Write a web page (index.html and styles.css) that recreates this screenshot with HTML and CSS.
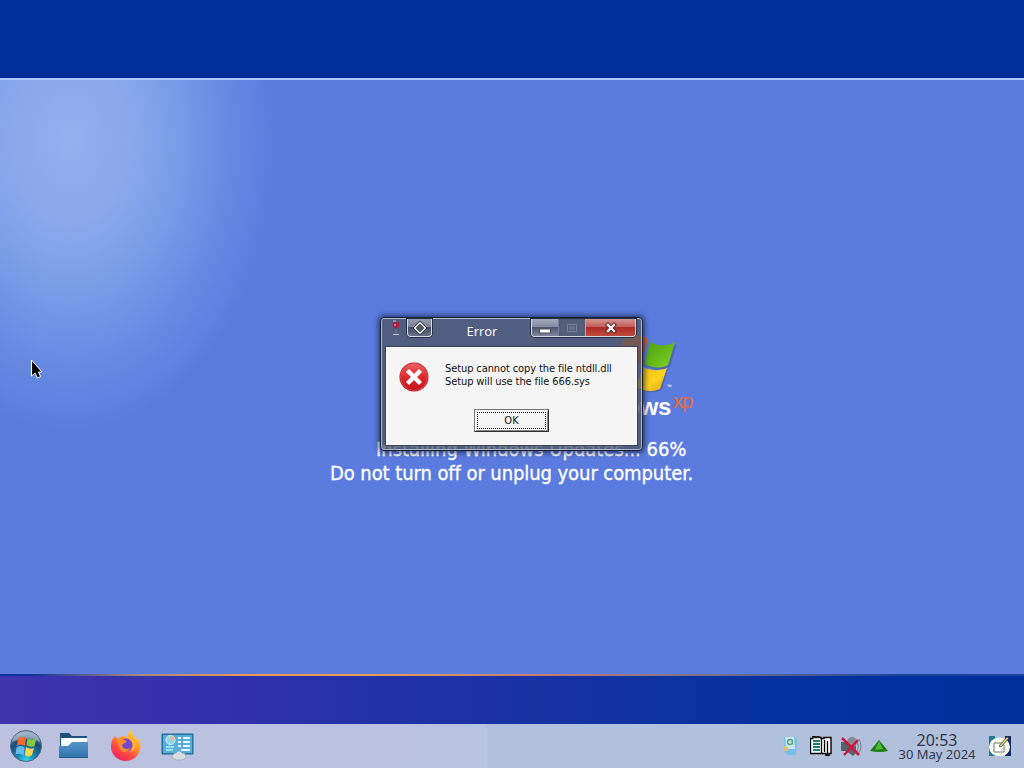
FILE: index.html
```html
<!DOCTYPE html>
<html lang="en">
<head>
  <meta charset="UTF-8" />
  <title>Desktop</title>
  <link rel="stylesheet" href="styles.css">
</head>
<body>

<div class="top-band"></div>

<div class="screen">
  <div class="brand">
    <svg class="flag" width="90" height="64" viewBox="0 0 90 64">
      <defs>
        <linearGradient id="gRed" x1="0" y1="0" x2="1" y2="1"><stop offset="0" stop-color="#f0843a"/><stop offset="1" stop-color="#d0401c"/></linearGradient>
        <linearGradient id="gGreen" x1="0" y1="0" x2="1" y2="1"><stop offset="0" stop-color="#4f9a16"/><stop offset="0.6" stop-color="#69bd18"/><stop offset="1" stop-color="#8ad52b"/></linearGradient>
        <linearGradient id="gYellow" x1="0" y1="0" x2="1" y2="1"><stop offset="0" stop-color="#f5b90d"/><stop offset="0.6" stop-color="#ffd21f"/><stop offset="1" stop-color="#d8a011"/></linearGradient>
      </defs>
      <path d="M22 7 C31 1 40 1 47 6 L40 30 C32 26 24 26 14 30 Z" fill="url(#gRed)"/>
      <path d="M51 11 C59 15 67 15 76 11 L69 34 C61 38 53 37 44 33 Z" fill="#3c4f83" opacity="0.45"/>
      <path d="M49 9 C57 13 65 14 74 9 L67 32 C59 36 51 35 43 31 Z" fill="url(#gGreen)"/>
      <path d="M43 35 C51 39 59 40 67 36 L61 57 C54 61 45 59 35 56 Z" fill="#3c4f83" opacity="0.45"/>
      <path d="M42 34 C50 38 58 38 66 35 L59 56 C52 59 43 59 35 54 Z" fill="url(#gYellow)"/>
    </svg>
    <div class="brand-name">Windows<span>xp</span></div>
    <div class="tm">™</div>
  </div>
  <div class="status">
    <p class="progress">Installing Windows Updates... 66%</p>
    <p class="warning">Do not turn off or unplug your computer.</p>
  </div>
</div>

<div class="bottom-band"></div>

<div class="taskbar">
  <div class="launchers">
    <svg width="34" height="34" viewBox="0 0 34 34">
      <defs>
        <radialGradient id="orb" cx="0.5" cy="0.95" r="0.9"><stop offset="0" stop-color="#35d5f2"/><stop offset="0.35" stop-color="#1581ae"/><stop offset="0.7" stop-color="#194c74"/><stop offset="1" stop-color="#8297b2"/></radialGradient>
      </defs>
      <circle cx="17" cy="17" r="15.500" fill="url(#orb)" stroke="#53647f"/>
      <path d="M3 13 C5 -1 29 -1 31 13 C22 8 12 9 3 13Z" fill="#dce5ef" opacity="0.45"/>
      <path d="M9 10 q4 -4 8 -1 l-1 8 q-4 -3 -8 0z" fill="#f26c2c"/>
      <path d="M18.500 9 q4 3 9 0 l-2 8 q-4 2 -8 -1z" fill="#8bc63d"/>
      <path d="M7.500 18.500 q4 -3 8 0 l-1 8 q-4 -3 -8 -1z" fill="#68b8ec"/>
      <path d="M17 18 q4 3 8 1 l-2 7 q-4 3 -7 0z" fill="#ffd44f"/>
    </svg>
    <svg class="folder" width="32" height="28" viewBox="0 0 32 28">
      <defs><linearGradient id="fold" x1="0" y1="0" x2="0" y2="1"><stop offset="0" stop-color="#5494c8"/><stop offset="1" stop-color="#2f73ac"/></linearGradient></defs>
      <path d="M2 1h9l3 3h15v14H2z" fill="#1e527c"/>
      <path d="M3 6h26v9H3z" fill="#f9fbfd"/>
      <path d="M1 14h9l4-4h16v16H1z" fill="url(#fold)"/>
      <path d="M1 25.500h29" stroke="#255b8a"/>
    </svg>
    <svg class="firefox" width="32" height="32" viewBox="0 0 32 32">
      <defs>
        <linearGradient id="fox" x1="0.85" y1="0" x2="0.25" y2="1"><stop offset="0" stop-color="#ffe23d"/><stop offset="0.4" stop-color="#ff9829"/><stop offset="0.72" stop-color="#ff4545"/><stop offset="1" stop-color="#ef2468"/></linearGradient>
      </defs>
      <path d="M5 6 C6 7 7 8 8 9 C10 7 12 6 14 6 C16 7 17 7 18 8 C17 4 19 2 21 0 C21 4 25 5 26 10 L28 8 C31 12 31 17 30 20 C28 27 22 31 16 31 C8 31 1 25 1 17 C1 12 2 9 5 6Z" fill="url(#fox)"/>
      <circle cx="16" cy="15" r="6.500" fill="#7647cf"/>
      <path d="M7 10 C10 8 12 8 14 10 L17 11 C16 13 13 13 12 15 C12 19 17 20 20 18 C17 25 9 22 9 16z" fill="#ff8c2b"/>
      <path d="M19 9 C24 12 24 19 20 22 C26 21 27 14 24 10z" fill="#ffb52f"/>
    </svg>
    <svg class="panel" width="34" height="30" viewBox="0 0 34 30">
      <path d="M1 2h31v20H1z" fill="#2687bd" stroke="#26628d"/>
      <path d="M2 3h29v18H2z" fill="#56aedb"/>
      <circle cx="9.500" cy="8" r="4.500" fill="#8fd3ef" stroke="#d9f5ff"/>
      <path d="M9.500 8V3.500A4.500 4.500 0 0 1 14 8z" fill="#e8b98a"/>
      <path d="M5 15h8M5 18h7" stroke="#b9ecff" stroke-width="1.500"/>
      <path d="M17 6h3M22 6h7M17 10h3M22 10h7M17 14h3M22 14h7M20 18h9" stroke="#e8fbff" stroke-width="2"/>
      <path d="M11 25 q1-4 4-4 q3-4 6 0 q4 0 4 4 q-1 3-7 3 t-7-3z" fill="#d9dde2" stroke="#8fa0b1" stroke-width="0.600"/>
    </svg>
  </div>
  <div class="tray">
    <svg class="recycle" width="14" height="20" viewBox="0 0 14 20">
      <path d="M1 1h11l2 3-1 15H5L1 16z" fill="#75bfe9"/>
      <path d="M2 1h9l1 12H3z" fill="#c7e7f3"/>
      <circle cx="7" cy="6" r="2.500" fill="none" stroke="#66a06f" stroke-width="1.500"/>
      <path d="M0 10l5 1v4H0z" fill="#efbd69"/>
    </svg>
    <svg class="book" width="22" height="20" viewBox="0 0 22 20">
      <path d="M.5 2.500H3v-2h2v1h2v-1h2v1h2v1h3v-1h7v16h-2v2h-3v-2H.5z" fill="#fff" stroke="#000" stroke-width="1.400"/>
      <path d="M3 5h7M3 8h7M3 11h7M3 14h7" stroke="#177b77" stroke-width="1.800"/>
      <path d="M11.500 3v14M14.500 4v12M17.500 5v14" stroke="#000" stroke-width="1.300"/>
    </svg>
    <svg class="sound" width="22" height="21" viewBox="0 0 22 21">
      <path d="M1 6h5l7-5 3 4v12l-3 3-7-5H1z" fill="#59636e"/>
      <circle cx="12" cy="6" r="5" fill="#858b94"/>
      <path d="M17 5q3 5 0 11M19 3q4 7 0 14" fill="none" stroke="#777d87"/>
      <path d="M2 2l17 17M18 4L4 19" stroke="#c9173f" stroke-width="2.500"/>
    </svg>
    <svg class="arrow" width="18" height="12" viewBox="0 0 18 12">
      <path d="M9 0L18 11Q9 13 0 11z" fill="#1d7b17"/>
      <path d="M9 1L13 9 5 10z" fill="#4dbd2e"/>
    </svg>
    <div class="clock">
      <span class="time">20:53</span>
      <span class="date">30 May 2024</span>
    </div>
    <svg class="show-desktop" width="24" height="20" viewBox="0 0 24 20">
      <path d="M1 0h22v20H1z" fill="#22798c"/>
      <path d="M7 0h10v20H7z" fill="#b5c2dc"/>
      <path d="M17 0h6v20h-6z" fill="#142962"/>
      <ellipse cx="11.500" cy="11" rx="10.500" ry="9.500" fill="#f7f8ed"/>
      <path d="M6 7h8l2 2v7H6z" fill="#fff" stroke="#74766d"/>
      <path d="M11 10L19 1l2 1-8 9z" fill="#e9d66b" stroke="#403c2a" stroke-width="0.800"/>
    </svg>
  </div>
</div>

<div class="dialog">
  <div class="titlebar">
    <svg class="wine" width="10" height="16" viewBox="0 0 10 16">
      <path d="M2 2h6l.5 4Q7 9 5 9T1.500 6z" fill="#a62442"/>
      <path d="M5 9v4" stroke="#7d8498"/>
      <path d="M2 1h3M2 14.500h6" stroke="#c9cbd5" stroke-width="1"/>
      <path d="M3 4h2v2H3z" fill="#ed6178"/>
    </svg>
    <div class="win-button keep">
      <svg width="14" height="14" viewBox="0 0 12 12"><path d="M6 1.500L10.500 6 6 10.500 1.500 6z" fill="#59606d" stroke="#242a36" stroke-width="2.600"/><path d="M6 1.500L10.500 6 6 10.500 1.500 6z" fill="none" stroke="#fff" stroke-width="1.200"/></svg>
    </div>
    <div class="title">Error</div>
    <div class="controls">
      <div class="minimize"><svg width="12" height="12" viewBox="0 0 12 12"><path d="M.5 7h11v4H.5z" fill="#fff" stroke="#4a4e58"/></svg></div>
      <div class="maximize"><svg width="12" height="12" viewBox="0 0 12 12"><path d="M1.500 2.500h9v7h-9zM4 5h4v2H4z" fill="none" stroke="#77819c"/></svg></div>
      <div class="close"><svg width="14" height="12" viewBox="0 0 14 12"><path d="M4 3l6 6M10 3L4 9" stroke="#5b2027" stroke-width="4.200" stroke-linecap="square"/><path d="M4 3l6 6M10 3L4 9" stroke="#fff" stroke-width="2.300" stroke-linecap="square"/></svg></div>
    </div>
  </div>
  <div class="dialog-body">
    <div class="message">
      <svg width="30" height="30" viewBox="0 0 30 30">
        <defs><linearGradient id="err" x1="0" y1="0" x2="0" y2="1"><stop offset="0" stop-color="#ef6262"/><stop offset="0.5" stop-color="#dc2a2d"/><stop offset="1" stop-color="#c3141c"/></linearGradient></defs>
        <circle cx="15" cy="15" r="14.500" fill="#b9161e"/>
        <circle cx="15" cy="15" r="13.500" fill="url(#err)" stroke="#e0595b" stroke-width="0.700"/>
        <path d="M8.500 8.500l13 13M21.500 8.500l-13 13" stroke="#fff" stroke-width="4.400"/>
      </svg>
      <p>Setup cannot copy the file ntdll.dll<br>Setup will use the file 666.sys</p>
    </div>
    <button class="ok"><span>OK</span></button>
  </div>
</div>

<svg class="cursor" width="14" height="20" viewBox="0 0 14 20">
  <path d="M1.500 1v16l3.500-3 2.500 5 3-1.500L8.500 13H12z" fill="#000" stroke="#fff" stroke-width="1"/>
</svg>

</body>
</html>
```
FILE: styles.css
```css
html, body { margin: 0; padding: 0; height: 100%; overflow: hidden; }
body { position: relative; display: flex; flex-direction: column; font-family: "Noto Sans", sans-serif; background: #5b7cde; cursor: default; }
p { margin: 0; }
svg { display: block; flex: none; }

.top-band { flex: 0 0 78px; background: linear-gradient(#00309c 90%, #002b94); }
.screen {
  flex: 1;
  display: flex;
  flex-direction: column;
  align-items: center;
  box-sizing: border-box;
  padding-top: 253px;
  border-top: 2px solid #adc4f4;
  background: radial-gradient(ellipse 205px 290px at 70px 60px, #93b1ee 0%, #8aa8eb 30%, #789ce8 54%, #678be3 76%, #5b7cde 100%);
}
.bottom-band {
  flex: 0 0 50px;
  box-sizing: border-box;
  border-top: 2px solid;
  border-image: linear-gradient(90deg, #0c359b 3%, #ac8978 14%, #e99a58 24%, #e99a58 37%, #c77a71 54%, #717386 70%, #1b439d 88%, #1b439d) 1;
  background: linear-gradient(90deg, #3f32ad, #3230ab 22%, #2731a8 32%, #1832a2 52%, #0531a0 76%, #002f9c);
}

.brand { position: relative; width: 362px; height: 104px; display: flex; flex-direction: column; align-items: flex-end; }
.flag { margin-right: 2px; }
.brand-name { margin-right: 1px; margin-top: -8px; color: #fff; font: bold 24px/36px "Liberation Sans", sans-serif; letter-spacing: -0.5px; }
.brand-name span { position: relative; top: -7px; margin-left: 2px; color: #e66a3f; font-weight: normal; font-size: 21px; letter-spacing: -1.5px; }
.tm { position: absolute; right: 21px; top: 50px; color: #fff; font-size: 6px; }
.status { width: 364px; color: #fff; font-family: "DejaVu Sans Condensed", "DejaVu Sans", sans-serif; font-stretch: condensed; font-size: 20px; line-height: 24px; white-space: nowrap; -webkit-text-stroke: 0.3px #fff; }
.progress { padding-left: 46px; letter-spacing: -0.02px; }
.warning { letter-spacing: -0.08px; }

.taskbar { flex: 0 0 44px; display: flex; justify-content: space-between; align-items: center; background: linear-gradient(90deg, #bcc1df, #b7c3df 47.6%, #b1c0dc 47.6%, #b1c0dc); }
.launchers { display: flex; align-items: center; padding-left: 9px; }
.folder { margin-left: 15px; }
.firefox { margin-left: 20px; }
.panel { margin-left: 19px; margin-top: 2px; }
.tray { display: flex; align-items: center; padding-right: 12px; }
.book { margin-left: 13px; }
.sound { margin-left: 8px; }
.arrow { margin-left: 8px; }
.clock { width: 78px; margin: 0 12px 0 10px; display: flex; flex-direction: column; align-items: center; color: #30384b; white-space: nowrap; }
.time { font-size: 16px; line-height: 16px; }
.date { font-size: 13px; line-height: 13px; }

.dialog {
  position: absolute;
  left: 380px;
  top: 317px;
  width: 263px;
  height: 134px;
  box-sizing: border-box;
  padding: 1px 5px 5px;
  border: 1px solid #171d2d;
  border-radius: 4px;
  background: rgba(78, 84, 98, 0.76);
  box-shadow: inset 0 0 0 1px #aeb9d3, 0 0 5px 2px rgba(20, 29, 65, 0.65);
  display: flex;
  flex-direction: column;
}
.titlebar { flex: 0 0 28px; display: flex; align-items: flex-start; color: #f4f6fb; }
.wine { margin: 1px 6px 0 5px; }
.win-button, .controls { box-sizing: border-box; height: 18px; border: 1px solid #d4dae7; border-top: 0; border-radius: 0 0 4px 4px; box-shadow: 0 0 0 1px #242e45; overflow: hidden; }
.win-button { width: 25px; display: flex; align-items: center; justify-content: center; background: linear-gradient(#929bad, #7a8396 45%, #414b61 50%, #667187); }
.title { flex: 1; text-align: center; font-size: 13px; line-height: 24px; padding-left: 1px; }
.controls { width: 105px; margin-right: 1px; display: flex; }
.controls > div { display: flex; align-items: center; justify-content: center; }
.minimize { width: 26px; background: linear-gradient(#a4aabc, #838ca0 45%, #4d566c 50%, #7c879f); }
.maximize { width: 26px; background: #535e79; border-left: 1px solid #737e98; border-right: 1px solid #a5adbf; }
.close { flex: 1; background: linear-gradient(#d39590, #c15d59 45%, #ad2926 50%, #c24b3c); }

.dialog-body { flex: 1; box-sizing: border-box; display: flex; flex-direction: column; align-items: center; background: #f5f5f5; border: 1px solid #fff; box-shadow: 0 0 0 1px #343f5c; padding-top: 14px; }
.message { align-self: stretch; display: flex; gap: 16px; padding-left: 12px; height: 47px; }
.message p { color: #111; font: 11px/13px "DejaVu Sans Condensed", "DejaVu Sans", sans-serif; font-stretch: condensed; letter-spacing: -0.1px; white-space: nowrap; }
.ok { width: 75px; height: 23px; box-sizing: border-box; padding: 2px; border: 1px solid; border-color: #777 #333 #333 #777; border-radius: 0; background: #f5f5f5; box-shadow: inset 1px 1px #fff, inset -1px -1px #888; font: 11px/15px "DejaVu Sans Condensed", "DejaVu Sans", sans-serif; font-stretch: condensed; color: #111; }
.ok span { display: block; border: 1px dotted #111; }

.cursor { position: absolute; left: 30px; top: 359px; }
```
